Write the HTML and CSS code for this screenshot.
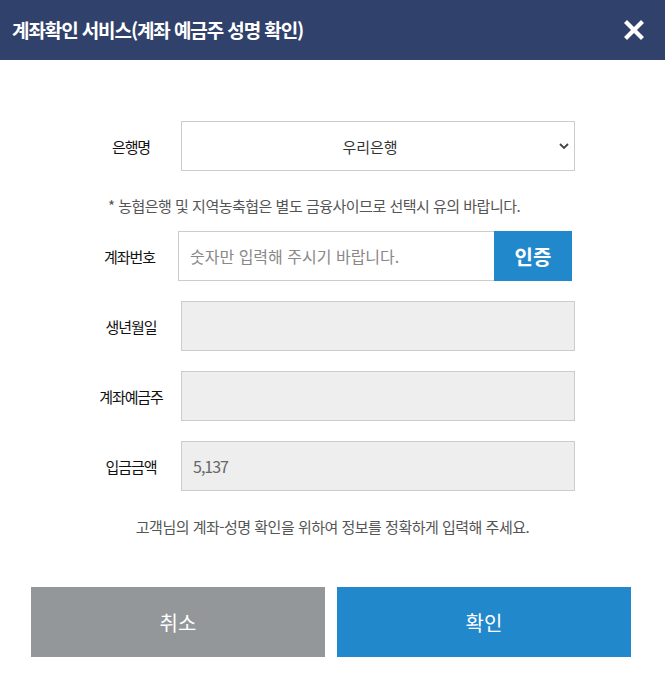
FILE: index.html
```html
<!DOCTYPE html>
<html lang="ko">
<head>
<meta charset="utf-8">
<title>계좌확인 서비스</title>
<link rel="stylesheet" href="styles.css">
</head>
<body>
<div class="modal">
  <header class="modal-header">
    <h1 class="modal-title">계좌확인 서비스(계좌 예금주 성명 확인)</h1>
    <button class="close-btn" type="button" aria-label="닫기">
      <svg width="20" height="20" viewBox="0 0 20 20"><path d="M3 3 L17 17 M17 3 L3 17" stroke="#fff" stroke-width="4.2" stroke-linecap="square" fill="none"/></svg>
    </button>
  </header>
  <div class="modal-body">
    <div class="row">
      <label class="label">은행명</label>
      <div class="select-wrap">
        <select class="select">
          <option>우리은행</option>
        </select>
        <svg class="chevron" width="10" height="6" viewBox="0 0 10 6"><path d="M1 1 L5 5 L9 1" stroke="#444" stroke-width="1.8" fill="none"/></svg>
      </div>
    </div>
    <p class="note">* 농협은행 및 지역농축협은 별도 금융사이므로 선택시 유의 바랍니다.</p>
    <div class="row row-account">
      <label class="label">계좌번호</label>
      <div class="account-group">
        <input class="input input-account" type="text" placeholder="숫자만 입력해 주시기 바랍니다.">
        <button class="auth-btn" type="button">인증</button>
      </div>
    </div>
    <div class="row">
      <label class="label">생년월일</label>
      <input class="input input-disabled" type="text" disabled>
    </div>
    <div class="row">
      <label class="label">계좌예금주</label>
      <input class="input input-disabled" type="text" disabled>
    </div>
    <div class="row">
      <label class="label">입금금액</label>
      <input class="input input-disabled input-amount" type="text" value="5,137" disabled>
    </div>
    <p class="info">고객님의 계좌-성명 확인을 위하여 정보를 정확하게 입력해 주세요.</p>
    <div class="actions">
      <button class="btn btn-cancel" type="button">취소</button>
      <button class="btn btn-ok" type="button">확인</button>
    </div>
  </div>
</div>
</body>
</html>
```

FILE: styles.css
```css
* { box-sizing: border-box; }
html, body {
  margin: 0;
  padding: 0;
  background: #fff;
  font-family: "Noto Sans CJK KR", "Noto Sans", sans-serif;
  color: #333;
}
.modal {
  width: 665px;
  height: 682px;
  background: #fff;
}
.modal-header {
  height: 60px;
  background: #30416b;
  display: flex;
  align-items: center;
  justify-content: space-between;
  padding: 0 21px 0 12px;
}
.modal-title {
  margin: 0;
  color: #fff;
  font-size: 19px;
  font-weight: 700;
  letter-spacing: -1.1px;
  line-height: 24px;
}
.close-btn {
  border: 0;
  background: transparent;
  padding: 0;
  width: 20px;
  height: 20px;
  display: flex;
  cursor: pointer;
}
.modal-body {
  padding-top: 61px;
}
.row {
  display: grid;
  grid-template-columns: 100px 394px;
  margin-left: 81px;
  align-items: center;
  height: 50px;
  margin-bottom: 20px;
}
.row-account {
  grid-template-columns: 97px 394px;
}
.label {
  text-align: center;
  font-size: 15px;
  font-weight: 400;
  letter-spacing: -1.1px;
  color: #111;
}
.select-wrap {
  position: relative;
  height: 50px;
}
.select {
  appearance: none;
  -webkit-appearance: none;
  width: 100%;
  height: 50px;
  border: 1px solid #ccc;
  background: #fff;
  font-family: inherit;
  font-size: 15px;
  color: #333;
  text-align: center;
  text-align-last: center;
  padding: 0 26px 0 10px;
  border-radius: 0;
  outline: none;
}
.chevron {
  position: absolute;
  right: 6px;
  top: 22px;
}
.note {
  margin: 25px 0 15px;
  padding-left: 108px;
  font-size: 15px;
  line-height: 20px;
  letter-spacing: -0.5px;
  color: #555;
}
.account-group {
  display: flex;
  height: 50px;
}
.input {
  width: 100%;
  height: 50px;
  border: 1px solid #ccc;
  background: #fff;
  font-family: inherit;
  font-size: 15px;
  color: #666;
  padding: 0 0 0 11px;
  border-radius: 0;
  outline: none;
  letter-spacing: -0.3px;
}
.input-account {
  font-size: 16px;
  letter-spacing: 0;
}
.input::placeholder {
  color: #888;
}
.account-group .input {
  flex: 1;
  border-right: 0;
}
.input-disabled {
  background: #eee;
  color: #666;
  -webkit-text-fill-color: #666;
  opacity: 1;
}
.input-amount {
  font-size: 16px;
  letter-spacing: -1px;
}
.auth-btn {
  width: 78px;
  flex: 0 0 78px;
  height: 50px;
  border: 0;
  background: #2288cc;
  color: #fff;
  font-family: inherit;
  font-size: 20px;
  font-weight: 700;
  padding: 0;
  cursor: pointer;
}
.info {
  margin: 26px 0 50px;
  text-align: center;
  font-size: 15px;
  line-height: 20px;
  letter-spacing: -0.5px;
  color: #555;
}
.actions {
  display: flex;
  gap: 12px;
  padding: 0 34px 0 31px;
}
.btn {
  flex: 0 0 294px;
  height: 70px;
  border: 0;
  color: #fff;
  font-family: inherit;
  font-size: 20px;
  font-weight: 400;
  cursor: pointer;
}
.btn-cancel { background: #939799; }
.btn-ok { background: #2288cc; }
```
